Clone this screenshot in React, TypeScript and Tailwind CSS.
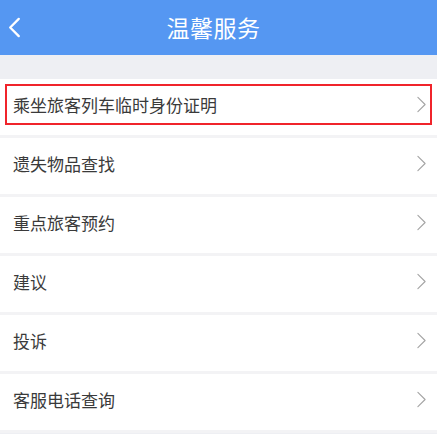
import React from "react";

const items = [
  "乘坐旅客列车临时身份证明",
  "遗失物品查找",
  "重点旅客预约",
  "建议",
  "投诉",
  "客服电话查询",
];

const Chevron = ({ className }: { className?: string }) => (
  <svg className={className} viewBox="0 0 10 18" fill="none">
    <path d="M1 1l8 8-8 8" stroke="currentColor" strokeWidth="1.2" strokeLinecap="round" strokeLinejoin="round" />
  </svg>
);

const App: React.FC = () => {
  return (
    <div
      className="flex h-[434px] w-[437px] flex-col overflow-hidden bg-[#eeeff3]"
      style={{ fontFamily: '"Noto Sans CJK SC", "Noto Sans", sans-serif' }}
    >
      <div className="relative flex h-[55px] shrink-0 items-center justify-center bg-[#5597f2] pr-[10px] pb-[1px]">
        <svg className="absolute left-[7px] top-[17px] h-[21px] w-[14px] text-white" viewBox="0 0 14 22" fill="none">
          <path d="M12 2L3 11l9 9" stroke="currentColor" strokeWidth="2.4" strokeLinecap="round" strokeLinejoin="round" />
        </svg>
        <h1 className="text-[23px] leading-none tracking-[0.5px] text-white">温馨服务</h1>
      </div>
      <div className="h-[24px] shrink-0" />
      <ul className="flex flex-col">
        {items.map((label, i) => (
          <li key={label} className="h-[59px] shrink-0 border-b-[3px] border-[#f3f3f5] bg-white px-[5px] pt-[5px]">
            <div
              className={
                i === 0
                  ? "flex h-[41px] items-center justify-between border-2 border-[#f0242b] pl-[6px] pr-[4px]"
                  : "flex h-[41px] items-center justify-between border-2 border-transparent pl-[6px] pr-[4px]"
              }
            >
              <span className="text-[17px] text-[#3a3a3a]">{label}</span>
              <Chevron className="h-[17px] w-[9px] text-[#a3a3a3]" />
            </div>
          </li>
        ))}
      </ul>
    </div>
  );
};

export default App;
